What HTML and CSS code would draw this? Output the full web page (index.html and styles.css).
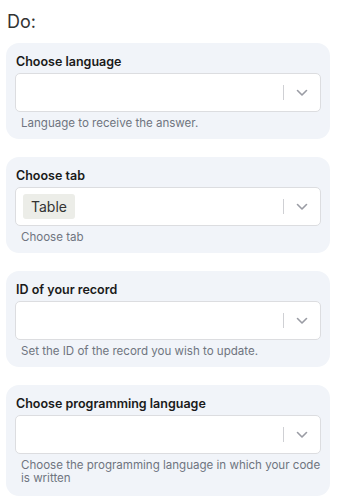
FILE: index.html
```html
<!DOCTYPE html>
<html lang="en">
<head>
  <meta charset="UTF-8">
  <meta name="viewport" content="width=device-width, initial-scale=1.0">
  <title>Do</title>
  <link rel="stylesheet" href="styles.css">
</head>
<body>
  <div class="container1">
    <h1 class="title">Do:</h1>

    <div class="card">
      <label class="field-label">Choose language</label>
      <div class="select">
        <div class="select-value"></div>
        <div class="select-controls">
          <span class="sep"></span>
          <svg class="chevron" width="12" height="8" viewBox="0 0 12 8"><path d="M1.5 1.5 L6 6 L10.5 1.5" fill="none" stroke="#9a9ca4" stroke-width="1.6" stroke-linecap="round" stroke-linejoin="round"/></svg>
        </div>
      </div>
      <p class="hint">Language to receive the answer.</p>
    </div>

    <div class="card">
      <label class="field-label">Choose tab</label>
      <div class="select">
        <div class="select-value"><span class="tag">Table</span></div>
        <div class="select-controls">
          <span class="sep"></span>
          <svg class="chevron" width="12" height="8" viewBox="0 0 12 8"><path d="M1.5 1.5 L6 6 L10.5 1.5" fill="none" stroke="#9a9ca4" stroke-width="1.6" stroke-linecap="round" stroke-linejoin="round"/></svg>
        </div>
      </div>
      <p class="hint">Choose tab</p>
    </div>

    <div class="card">
      <label class="field-label">ID of your record</label>
      <div class="select">
        <div class="select-value"></div>
        <div class="select-controls">
          <span class="sep"></span>
          <svg class="chevron" width="12" height="8" viewBox="0 0 12 8"><path d="M1.5 1.5 L6 6 L10.5 1.5" fill="none" stroke="#9a9ca4" stroke-width="1.6" stroke-linecap="round" stroke-linejoin="round"/></svg>
        </div>
      </div>
      <p class="hint">Set the ID of the record you wish to update.</p>
    </div>

    <div class="card card-last">
      <label class="field-label">Choose programming language</label>
      <div class="select">
        <div class="select-value"></div>
        <div class="select-controls">
          <span class="sep"></span>
          <svg class="chevron" width="12" height="8" viewBox="0 0 12 8"><path d="M1.5 1.5 L6 6 L10.5 1.5" fill="none" stroke="#9a9ca4" stroke-width="1.6" stroke-linecap="round" stroke-linejoin="round"/></svg>
        </div>
      </div>
      <p class="hint">Choose the programming language in which your code is written</p>
    </div>
  </div>
</body>
</html>
```

FILE: styles.css
```css
body {
  font-family: Inter, "Noto Sans", sans-serif;
  margin: 0;
  background: #fff;
}
.container1 {
  width: 324px;
  margin-left: 6px;
  padding-top: 10px;
}
.title {
  font-size: 18px;
  font-weight: 400;
  color: #333;
  margin: 0 0 9px 1px;
  line-height: 24px;
}
.card {
  background: #f1f4f9;
  border-radius: 13px;
  padding: 10px 9px 9px 9px;
  margin-bottom: 18px;
}
.card-last {
  padding-bottom: 11px;
}
.field-label {
  display: block;
  font-size: 12.5px;
  font-weight: 600;
  color: #1a1a1a;
  line-height: 18px;
  margin: 0 0 2px 1px;
}
.select {
  display: flex;
  align-items: center;
  background: #fff;
  border: 1px solid #dcdde0;
  border-radius: 5px;
  height: 39px;
  box-sizing: border-box;
}
.select-value {
  flex: 1;
  padding-left: 7px;
  display: flex;
  align-items: center;
}
.select-controls {
  display: flex;
  align-items: center;
  padding-right: 12px;
}
.sep {
  width: 1px;
  height: 15px;
  background: #cfd0d4;
  margin-right: 12px;
}
.chevron {
  display: block;
}
.tag {
  background: #ecede8;
  color: #333;
  font-size: 14px;
  line-height: 25px;
  padding: 0 8px;
  border-radius: 3px;
}
.hint {
  font-size: 11.55px;
  line-height: 13px;
  color: #6f7480;
  margin: 5px 0 0 6px;
}
```
